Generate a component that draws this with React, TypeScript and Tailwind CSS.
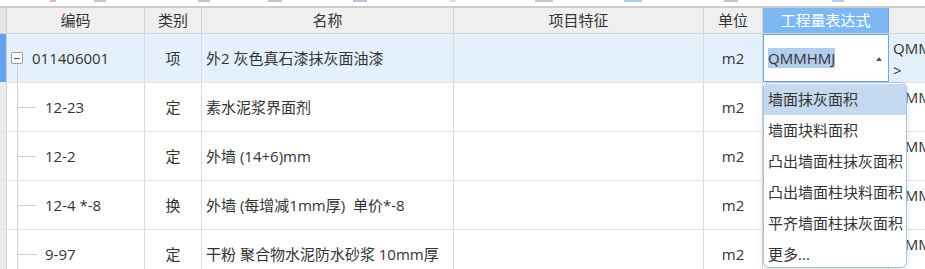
import React from "react";

const COLS = "grid grid-cols-[7px_138px_57px_252px_250px_59px_126px_36px]";

interface Row {
  code: string;
  kind: string;
  name: string;
  unit: string;
  expr: string[];
}

const ROWS: Row[] = [
  { code: "011406001", kind: "项", name: "外2 灰色真石漆抹灰面油漆", unit: "m2", expr: ["QMMHMJ", ">"] },
  { code: "12-23", kind: "定", name: "素水泥浆界面剂", unit: "m2", expr: ["QMMHMJ"] },
  { code: "12-2", kind: "定", name: "外墙 (14+6)mm", unit: "m2", expr: ["QMMHMJ"] },
  { code: "12-4 *-8", kind: "换", name: "外墙 (每增减1mm厚)  单价*-8", unit: "m2", expr: ["QMMHMJ"] },
  { code: "9-97", kind: "定", name: "干粉 聚合物水泥防水砂浆 10mm厚", unit: "m2", expr: ["QMMHMJ"] },
];

const OPTIONS = ["墙面抹灰面积", "墙面块料面积", "凸出墙面柱抹灰面积", "凸出墙面柱块料面积", "平齐墙面柱抹灰面积", "更多..."];

// faint bits of the toolbar icons cut off above the grid
const FRAGMENTS = [
  { left: 50, width: 6, color: "bg-[#e8b9a0]" },
  { left: 94, width: 12, color: "bg-[#b9c9dc]" },
  { left: 198, width: 12, color: "bg-[#c4c4c4]" },
  { left: 268, width: 14, color: "bg-[#bcc8d8]" },
  { left: 353, width: 14, color: "bg-[#b8c6d8]" },
  { left: 450, width: 6, color: "bg-[#d8e2ee]" },
  { left: 535, width: 18, color: "bg-[#c9c9c9]" },
  { left: 624, width: 18, color: "bg-[#b6cbe6]" },
  { left: 724, width: 14, color: "bg-[#c6c6c6]" },
  { left: 832, width: 12, color: "bg-[#b9d0ec]" },
];

function CodeCell({ row, first }: { row: Row; first: boolean }) {
  if (first) {
    return (
      <div className="relative flex items-center pl-[4px] border-r border-[#dadada]">
        <div className="w-[12px] h-[12px] border border-[#9a9a9a] rounded-[2px] flex items-center justify-center bg-white">
          <div className="w-[6px] h-px bg-[#555]" />
        </div>
        <span className="ml-[9px]">{row.code}</span>
        <div className="absolute left-[10px] top-[31px] bottom-0 w-px bg-[#cfcfcf]" />
      </div>
    );
  }
  return (
    <div className="flex items-stretch pl-[10px] border-r border-[#dadada]">
      <div className="w-[20px] border-l border-[#cfcfcf] flex items-center">
        <div className="h-px w-full bg-[#cfcfcf]" />
      </div>
      <span className="ml-[8px] self-center">{row.code}</span>
    </div>
  );
}

export default function App() {
  return (
    <div
      className="relative w-[925px] h-[269px] overflow-hidden bg-white text-[15px] text-[#333]"
      style={{ fontFamily: '"Open Sans", "Noto Sans CJK SC", sans-serif' }}
    >
      {/* toolbar remnants */}
      <div className="relative h-[6px] bg-white">
        {FRAGMENTS.map((f, i) => (
          <div key={i} className={`absolute top-0 h-[2px] ${f.color}`} style={{ left: f.left, width: f.width }} />
        ))}
      </div>
      <div className="h-[2px] bg-[#cdcdcd]" />

      {/* header */}
      <div className={`${COLS} h-[26px] bg-[#efefef] border-b border-[#d4d4d4] text-[15px] leading-none`}>
        <div className="border-r border-[#d4d4d4] bg-[#e6e6e6]" />
        <div className="flex items-center justify-center border-r border-[#d4d4d4]">编码</div>
        <div className="flex items-center justify-center border-r border-[#d4d4d4]">类别</div>
        <div className="flex items-center justify-center border-r border-[#d4d4d4]">名称</div>
        <div className="flex items-center justify-center border-r border-[#d4d4d4]">项目特征</div>
        <div className="flex items-center justify-center border-r border-[#d4d4d4]">单位</div>
        <div className="flex items-center justify-center bg-[#7db8f4] text-white border-r border-[#6aa8ee]">工程量表达式</div>
        <div />
      </div>

      {/* rows */}
      {ROWS.map((row, i) => {
        const first = i === 0;
        return (
          <div
            key={row.code}
            className={`${COLS} h-[49px] border-b border-[#e2e2e2] ${first ? "bg-[#e4f1fd]" : "bg-white"}`}
          >
            <div className={`border-r border-[#d4d4d4] ${first ? "bg-[#62a4f0]" : "bg-[#ececec]"}`} />
            <CodeCell row={row} first={first} />
            <div className="flex items-center justify-center border-r border-[#dadada]">{row.kind}</div>
            <div className="flex items-center pl-[4px] border-r border-[#dadada] whitespace-pre">{row.name}</div>
            <div className="border-r border-[#dadada]" />
            <div className="flex items-center justify-center border-r border-[#dadada]">{row.unit}</div>
            {first ? (
              <div className="relative flex items-center bg-white border border-[#6aa8ee] pl-[4px]">
                <span className="bg-[#b3cdef] leading-[20px]">QMMHMJ</span>
                <span className="absolute right-[6px] top-[22px] w-0 h-0 border-l-[3px] border-r-[3px] border-b-[4px] border-l-transparent border-r-transparent border-b-[#555]" />
              </div>
            ) : (
              <div className="border-r border-[#dadada]" />
            )}
            <div className="pl-[4px] pt-[3px] overflow-hidden leading-[22px] whitespace-nowrap">
              {row.expr.map((t, k) => (
                <div key={k}>{t}</div>
              ))}
            </div>
          </div>
        );
      })}

      {/* dropdown list */}
      <div className="absolute left-[763px] top-[82px] w-[144px] h-[186px] bg-white border border-[#aac4de] rounded-[6px] shadow-[0_2px_6px_rgba(0,0,0,0.12)] overflow-hidden py-[1px]">
        {OPTIONS.map((o, i) => (
          <div
            key={o}
            className={`h-[31px] flex items-center pl-[4px] whitespace-nowrap ${i === 0 ? "bg-[#c4d9ef]" : ""}`}
          >
            {o}
          </div>
        ))}
      </div>
    </div>
  );
}
